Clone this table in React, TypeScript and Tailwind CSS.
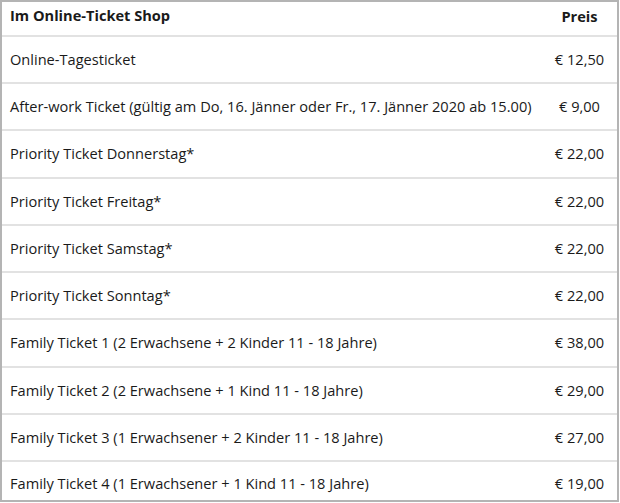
import React from 'react';

const TICKETS: { name: string; price: string }[] = [
  { name: 'Online-Tagesticket', price: '€ 12,50' },
  { name: 'After-work Ticket (gültig am Do, 16. Jänner oder Fr., 17. Jänner 2020 ab 15.00)', price: '€ 9,00' },
  { name: 'Priority Ticket Donnerstag*', price: '€ 22,00' },
  { name: 'Priority Ticket Freitag*', price: '€ 22,00' },
  { name: 'Priority Ticket Samstag*', price: '€ 22,00' },
  { name: 'Priority Ticket Sonntag*', price: '€ 22,00' },
  { name: 'Family Ticket 1 (2 Erwachsene + 2 Kinder 11 - 18 Jahre)', price: '€ 38,00' },
  { name: 'Family Ticket 2 (2 Erwachsene + 1 Kind 11 - 18 Jahre)', price: '€ 29,00' },
  { name: 'Family Ticket 3 (1 Erwachsener + 2 Kinder 11 - 18 Jahre)', price: '€ 27,00' },
  { name: 'Family Ticket 4 (1 Erwachsener + 1 Kind 11 - 18 Jahre)', price: '€ 19,00' },
];

// row pitch in the screenshot is ~47.2px, so a couple of rows get an extra pixel
const rowClass = (idx: number) => {
  if (idx === TICKETS.length - 1) return 'flex flex-1 items-start pt-[11px]';
  const h = idx === 2 || idx === 6 ? 'h-[48px]' : 'h-[47px]';
  return `flex ${h} items-center border-b-2 border-[#e2e2e2] shrink-0`;
};

export default function App() {
  return (
    <div className="w-[620px] h-[503px] bg-white font-['Open_Sans',sans-serif] text-[14.6px] text-[#1a1a1a]">
      <div className="w-[619px] h-[502px] border-2 border-[#b4b4b4] flex flex-col overflow-hidden">
        {/* Header */}
        <div className="flex h-[35px] border-b-2 border-[#e2e2e2] font-bold shrink-0">
          <div className="flex-1 pl-[8px] pt-[3px]">Im Online-Ticket Shop</div>
          <div className="w-[75px] text-center pt-[4px]">Preis</div>
        </div>

        {/* Rows */}
        {TICKETS.map((t, idx) => (
          <div key={t.name} className={rowClass(idx)}>
            <div className="flex-1 pl-[8px] whitespace-nowrap">{t.name}</div>
            <div className="w-[75px] text-center">{t.price}</div>
          </div>
        ))}
      </div>
    </div>
  );
}
